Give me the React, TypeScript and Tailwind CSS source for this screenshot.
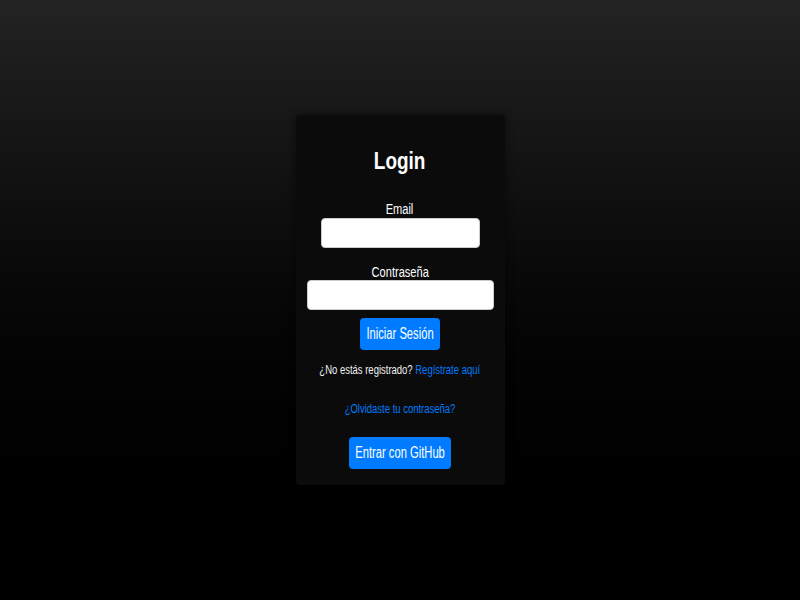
import React from "react";

function N({ children, className = "scale-x-[0.79]" }: { children: React.ReactNode; className?: string }) {
  return <span className={"inline-block whitespace-nowrap origin-center " + className}>{children}</span>;
}

export default function App() {
  const font = { fontFamily: '"Liberation Sans", Arial, sans-serif' };
  return (
    <div
      className="w-full h-[600px] bg-gradient-to-b from-[#232323] to-[#000000] flex justify-center"
      style={font}
    >
      <div className="mt-[115px] w-[209px] h-[370px] bg-[#0b0b0b] rounded-[4px] shadow-[0_0_8px_rgba(0,0,0,0.5)] flex flex-col items-center">
        <h2 className="mt-[32px] h-[28px] leading-[28px] text-[24px] font-bold text-white">
          <N>Login</N>
        </h2>
        <label className="mt-[26px] h-[16px] leading-[16px] text-[14px] text-white">
          <N>Email</N>
        </label>
        <input type="email" className="mt-[1px] w-[159px] h-[30px] bg-white rounded-[4px] border border-[#ccc] outline-none" />
        <label className="mt-[16px] h-[16px] leading-[16px] text-[14px] text-white">
          <N>Contraseña</N>
        </label>
        <input type="password" className="mt-0 w-[187px] h-[30px] bg-white rounded-[4px] border border-[#ccc] outline-none" />
        <button className="mt-[8px] w-[80px] h-[32px] bg-[#007bff] rounded-[4px] text-white text-[16px] leading-[32px] flex justify-center">
          <N className="scale-x-[0.7]">Iniciar Sesión</N>
        </button>
        <p className="mt-[13px] h-[14px] leading-[14px] text-[12px] text-[#f2f2f2] whitespace-nowrap">
          <N>
            ¿No estás registrado? <a className="text-[#007bff]">Regístrate aquí</a>
          </N>
        </p>
        <a className="mt-[25px] h-[14px] leading-[14px] text-[12px] text-[#007bff] whitespace-nowrap">
          <N>¿Olvidaste tu contraseña?</N>
        </a>
        <button className="mt-[21px] w-[102px] h-[32px] bg-[#007bff] rounded-[4px] text-white text-[16px] leading-[32px] flex justify-center">
          <N className="scale-x-[0.7]">Entrar con GitHub</N>
        </button>
      </div>
    </div>
  );
}
